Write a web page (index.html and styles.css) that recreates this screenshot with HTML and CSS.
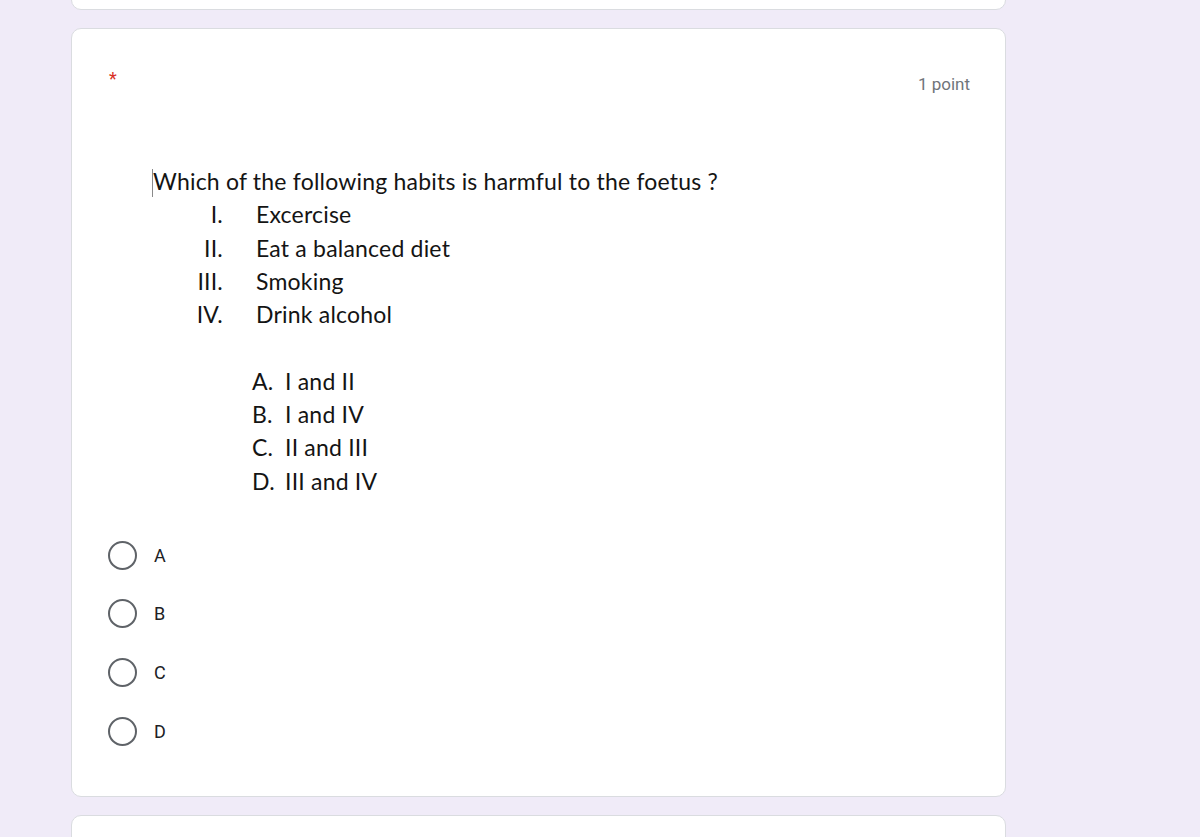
FILE: index.html
```html
<!DOCTYPE html>
<html lang="en">
<head>
<meta charset="utf-8">
<title>Question</title>
<link rel="stylesheet" href="styles.css">
</head>
<body>
<div class="page">
  <div class="card stub"></div>
  <div class="card question">
    <div class="q-header">
      <span class="required">*</span>
      <span class="points">1 point</span>
    </div>
    <div class="q-image">
      <p class="q-title"><span class="caret"></span>Which of the following habits is harmful to the foetus ?</p>
      <ol class="roman">
        <li><span class="num">I.</span><span>Excercise</span></li>
        <li><span class="num">II.</span><span>Eat a balanced diet</span></li>
        <li><span class="num">III.</span><span>Smoking</span></li>
        <li><span class="num">IV.</span><span>Drink alcohol</span></li>
      </ol>
      <ol class="letters">
        <li><span class="let">A.</span><span>I and II</span></li>
        <li><span class="let">B.</span><span>I and IV</span></li>
        <li><span class="let">C.</span><span>II and III</span></li>
        <li><span class="let">D.</span><span>III and IV</span></li>
      </ol>
    </div>
    <div class="choices">
      <label class="choice"><span class="radio"></span><span class="choice-label">A</span></label>
      <label class="choice"><span class="radio"></span><span class="choice-label">B</span></label>
      <label class="choice"><span class="radio"></span><span class="choice-label">C</span></label>
      <label class="choice"><span class="radio"></span><span class="choice-label">D</span></label>
    </div>
  </div>
  <div class="card stub-bottom"></div>
</div>
</body>
</html>
```

FILE: styles.css
```css
html, body {
  margin: 0;
  padding: 0;
  background: #f0ebf8;
  overflow: hidden;
}
.page {
  display: flex;
  flex-direction: column;
  gap: 18px;
  width: 935px;
  margin-left: 71px;
  margin-top: -20px;
}
.card {
  box-sizing: border-box;
  background: #ffffff;
  border: 1px solid #dadce0;
  border-radius: 10px;
}
.stub { height: 30px; }
.stub-bottom { height: 60px; }
.question {
  height: 769px;
  padding: 42px 35px 0 37px;
}
.q-header {
  display: flex;
  justify-content: space-between;
  align-items: flex-start;
  height: 24px;
}
.required {
  color: #d93025;
  font-family: Roboto, "Liberation Sans", sans-serif;
  font-size: 18px;
  line-height: 20px;
  margin-top: -2px;
}
.points {
  color: #70757a;
  font-family: Roboto, "Liberation Sans", sans-serif;
  font-size: 17px;
  line-height: 24px;
  margin-top: 1px;
}
.q-image {
  margin: 70px 0 0 44px;
  font-family: Lato, "Open Sans", sans-serif;
  font-size: 23px;
  letter-spacing: 0.2px;
  line-height: 33.3px;
  color: #141414;
}
.q-title {
  margin: 0;
  position: relative;
}
.caret {
  position: absolute;
  left: -1px;
  top: 4px;
  width: 1px;
  height: 28px;
  background: #8a8a8a;
}
.roman, .letters {
  list-style: none;
  margin: 0;
  padding: 0;
}
.roman li, .letters li {
  display: flex;
}
.num {
  width: 70px;
  text-align: right;
  margin-right: 33px;
}
.letters {
  margin-top: 33.3px;
}
.let {
  margin-left: 99px;
  width: 33px;
}
.choices {
  margin-top: 28px;
  margin-left: -1px;
}
.choice {
  display: flex;
  align-items: center;
  height: 58.67px;
}
.radio {
  box-sizing: border-box;
  width: 29px;
  height: 29px;
  border: 2.5px solid #5f6368;
  border-radius: 50%;
  margin-right: 17px;
}
.choice-label {
  font-family: Roboto, "Liberation Sans", sans-serif;
  font-size: 18px;
  color: #202124;
}
```
